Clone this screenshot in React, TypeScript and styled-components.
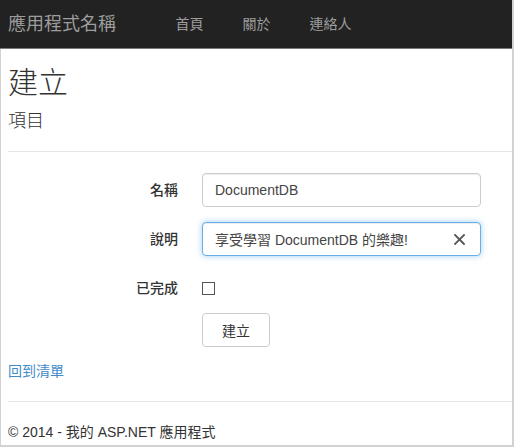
import React from 'react';
import styled, { createGlobalStyle } from 'styled-components';

const GlobalStyle = createGlobalStyle`
  html, body {
    margin: 0;
    padding: 0;
    background: #fff;
  }
  body {
    font-family: "Liberation Sans", Arial, "Noto Sans CJK TC", sans-serif;
    font-size: 14px;
    line-height: 20px;
    color: #333;
  }
  * {
    box-sizing: border-box;
  }
`;

const Frame = styled.div`
  width: 514px;
  height: 447px;
  border-right: 2px solid #d2d2d2;
  border-bottom: 2px solid #d2d2d2;
  display: flex;
  flex-direction: column;
  overflow: hidden;
`;

const Navbar = styled.nav`
  height: 49px;
  flex: none;
  background: #222;
  border-bottom: 1px solid #7a7a7a;
  display: flex;
  align-items: center;
`;

const Brand = styled.a`
  padding-left: 8px;
  font-size: 18px;
  line-height: 20px;
  color: #9d9d9d;
  text-decoration: none;
`;

const NavList = styled.ul`
  display: flex;
  list-style: none;
  margin: 0 0 0 40px;
  padding: 0;
`;

const NavLink = styled.a`
  display: block;
  padding: 0 19.5px;
  color: #9d9d9d;
  font-size: 14px;
  text-decoration: none;
`;

const Body = styled.div`
  flex: 1;
  border-left: 1px solid #d2d2d2;
  padding: 17px 0 0 7px;
`;

const Title = styled.h2`
  margin: 0;
  font-size: 30px;
  line-height: 33px;
  font-weight: 300;
`;

const Subtitle = styled.h4`
  margin: 12px 0 0;
  font-size: 18px;
  line-height: 20px;
  font-weight: 300;
`;

const Rule = styled.hr`
  margin: 20px 0;
  border: 0;
  border-top: 1px solid #e5e5e5;
`;

const Form = styled.form`
  display: grid;
  grid-template-columns: 170px 280px;
  column-gap: 24px;
  row-gap: 15px;
  padding-top: 1px;
`;

const Label = styled.label<{ $top?: number }>`
  text-align: right;
  font-weight: 500;
  padding-top: ${(p) => p.$top ?? 7}px;
  line-height: 20px;
`;

const Field = styled.div`
  position: relative;
`;

const Input = styled.input<{ $focus?: boolean }>`
  display: block;
  width: 279px;
  height: 34px;
  padding: 6px 12px;
  font-family: inherit;
  font-size: 14px;
  color: #444;
  background: #fff;
  border: 1px solid ${(p) => (p.$focus ? '#66afe9' : '#ccc')};
  border-radius: 4px;
  box-shadow: ${(p) =>
    p.$focus
      ? 'inset 0 1px 1px rgba(0,0,0,.075), 0 0 6px rgba(102,175,233,.6)'
      : 'inset 0 1px 1px rgba(0,0,0,.075)'};
  outline: none;
`;

const Clear = styled.span`
  position: absolute;
  left: 252px;
  top: 12px;
  width: 11px;
  height: 11px;
  display: flex;
`;

const CheckRow = styled.div`
  padding-top: 11px;
  height: 27px;
`;

const Checkbox = styled.span`
  display: block;
  width: 13px;
  height: 13px;
  border: 1px solid #555;
  background: #fff;
`;

const Button = styled.button`
  width: 68px;
  height: 34px;
  padding: 6px 12px;
  font-family: inherit;
  font-size: 14px;
  color: #333;
  background: #fff;
  border: 1px solid #ccc;
  border-radius: 4px;
`;

const BackLink = styled.a`
  display: block;
  margin-top: 14px;
  color: #428bca;
  text-decoration: none;
`;

const Footer = styled.footer`
  line-height: 20px;
`;

export default function App() {
  return (
    <>
      <GlobalStyle />
      <Frame>
        <Navbar>
          <Brand href="#">應用程式名稱</Brand>
          <NavList>
            <li><NavLink href="#">首頁</NavLink></li>
            <li><NavLink href="#">關於</NavLink></li>
            <li><NavLink href="#">連絡人</NavLink></li>
          </NavList>
        </Navbar>
        <Body>
          <Title>建立</Title>
          <Subtitle>項目</Subtitle>
          <Rule />
          <Form onSubmit={(e) => e.preventDefault()}>
            <Label>名稱</Label>
            <Field>
              <Input defaultValue="DocumentDB" />
            </Field>
            <Label>說明</Label>
            <Field>
              <Input $focus defaultValue="享受學習 DocumentDB 的樂趣!" />
              <Clear>
                <svg width="11" height="11" viewBox="0 0 11 11">
                  <path d="M1 1L10 10M10 1L1 10" stroke="#555" strokeWidth="1.8" strokeLinecap="square" />
                </svg>
              </Clear>
            </Field>
            <Label>已完成</Label>
            <CheckRow>
              <Checkbox />
            </CheckRow>
            <span />
            <div>
              <Button type="submit">建立</Button>
            </div>
          </Form>
          <BackLink href="#">回到清單</BackLink>
          <Rule />
          <Footer>© 2014 - 我的 ASP.NET 應用程式</Footer>
        </Body>
      </Frame>
    </>
  );
}
